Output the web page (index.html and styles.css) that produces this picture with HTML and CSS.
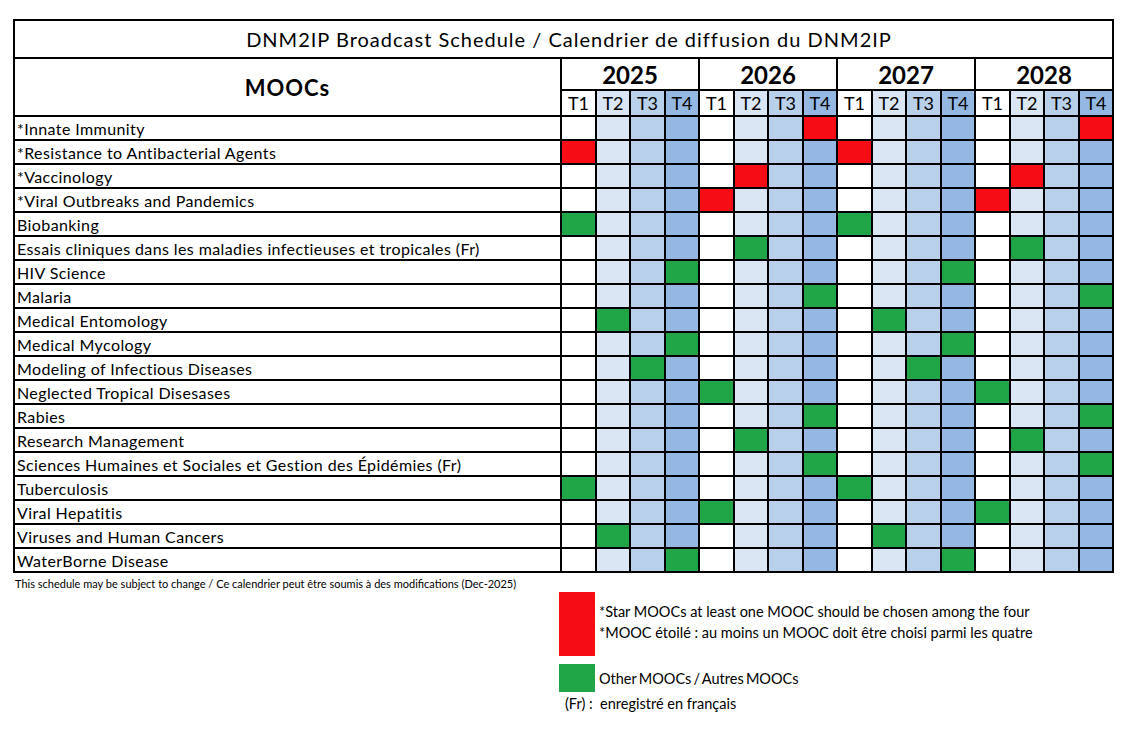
FILE: index.html
```html
<!DOCTYPE html>
<html lang="en">
<head>
<meta charset="utf-8">
<title>DNM2IP Broadcast Schedule</title>
<link rel="stylesheet" href="styles.css">
</head>
<body>
<div class="page">
  <div class="sched">
    <div class="title">DNM2IP Broadcast Schedule / Calendrier de diffusion du DNM2IP</div>
    <div class="moocs">MOOCs</div>
    <div class="year">2025</div><div class="year">2026</div><div class="year">2027</div><div class="year">2028</div>
    <div class="t a">T1</div><div class="t b">T2</div><div class="t c">T3</div><div class="t d">T4</div>
    <div class="t a">T1</div><div class="t b">T2</div><div class="t c">T3</div><div class="t d">T4</div>
    <div class="t a">T1</div><div class="t b">T2</div><div class="t c">T3</div><div class="t d">T4</div>
    <div class="t a">T1</div><div class="t b">T2</div><div class="t c">T3</div><div class="t d">T4</div>

    <div class="n">*Innate Immunity</div>
    <div class="a"></div><div class="b"></div><div class="c"></div><div class="d"></div><div class="a"></div><div class="b"></div><div class="c"></div><div class="r"></div>
    <div class="a"></div><div class="b"></div><div class="c"></div><div class="d"></div><div class="a"></div><div class="b"></div><div class="c"></div><div class="r"></div>

    <div class="n">*Resistance to Antibacterial Agents</div>
    <div class="r"></div><div class="b"></div><div class="c"></div><div class="d"></div><div class="a"></div><div class="b"></div><div class="c"></div><div class="d"></div>
    <div class="r"></div><div class="b"></div><div class="c"></div><div class="d"></div><div class="a"></div><div class="b"></div><div class="c"></div><div class="d"></div>

    <div class="n">*Vaccinology</div>
    <div class="a"></div><div class="b"></div><div class="c"></div><div class="d"></div><div class="a"></div><div class="r"></div><div class="c"></div><div class="d"></div>
    <div class="a"></div><div class="b"></div><div class="c"></div><div class="d"></div><div class="a"></div><div class="r"></div><div class="c"></div><div class="d"></div>

    <div class="n">*Viral Outbreaks and Pandemics</div>
    <div class="a"></div><div class="b"></div><div class="c"></div><div class="d"></div><div class="r"></div><div class="b"></div><div class="c"></div><div class="d"></div>
    <div class="a"></div><div class="b"></div><div class="c"></div><div class="d"></div><div class="r"></div><div class="b"></div><div class="c"></div><div class="d"></div>

    <div class="n">Biobanking</div>
    <div class="g"></div><div class="b"></div><div class="c"></div><div class="d"></div><div class="a"></div><div class="b"></div><div class="c"></div><div class="d"></div>
    <div class="g"></div><div class="b"></div><div class="c"></div><div class="d"></div><div class="a"></div><div class="b"></div><div class="c"></div><div class="d"></div>

    <div class="n">Essais cliniques dans les maladies infectieuses et tropicales (Fr)</div>
    <div class="a"></div><div class="b"></div><div class="c"></div><div class="d"></div><div class="a"></div><div class="g"></div><div class="c"></div><div class="d"></div>
    <div class="a"></div><div class="b"></div><div class="c"></div><div class="d"></div><div class="a"></div><div class="g"></div><div class="c"></div><div class="d"></div>

    <div class="n">HIV Science</div>
    <div class="a"></div><div class="b"></div><div class="c"></div><div class="g"></div><div class="a"></div><div class="b"></div><div class="c"></div><div class="d"></div>
    <div class="a"></div><div class="b"></div><div class="c"></div><div class="g"></div><div class="a"></div><div class="b"></div><div class="c"></div><div class="d"></div>

    <div class="n">Malaria</div>
    <div class="a"></div><div class="b"></div><div class="c"></div><div class="d"></div><div class="a"></div><div class="b"></div><div class="c"></div><div class="g"></div>
    <div class="a"></div><div class="b"></div><div class="c"></div><div class="d"></div><div class="a"></div><div class="b"></div><div class="c"></div><div class="g"></div>

    <div class="n">Medical Entomology</div>
    <div class="a"></div><div class="g"></div><div class="c"></div><div class="d"></div><div class="a"></div><div class="b"></div><div class="c"></div><div class="d"></div>
    <div class="a"></div><div class="g"></div><div class="c"></div><div class="d"></div><div class="a"></div><div class="b"></div><div class="c"></div><div class="d"></div>

    <div class="n">Medical Mycology</div>
    <div class="a"></div><div class="b"></div><div class="c"></div><div class="g"></div><div class="a"></div><div class="b"></div><div class="c"></div><div class="d"></div>
    <div class="a"></div><div class="b"></div><div class="c"></div><div class="g"></div><div class="a"></div><div class="b"></div><div class="c"></div><div class="d"></div>

    <div class="n">Modeling of Infectious Diseases</div>
    <div class="a"></div><div class="b"></div><div class="g"></div><div class="d"></div><div class="a"></div><div class="b"></div><div class="c"></div><div class="d"></div>
    <div class="a"></div><div class="b"></div><div class="g"></div><div class="d"></div><div class="a"></div><div class="b"></div><div class="c"></div><div class="d"></div>

    <div class="n">Neglected Tropical Disesases</div>
    <div class="a"></div><div class="b"></div><div class="c"></div><div class="d"></div><div class="g"></div><div class="b"></div><div class="c"></div><div class="d"></div>
    <div class="a"></div><div class="b"></div><div class="c"></div><div class="d"></div><div class="g"></div><div class="b"></div><div class="c"></div><div class="d"></div>

    <div class="n">Rabies</div>
    <div class="a"></div><div class="b"></div><div class="c"></div><div class="d"></div><div class="a"></div><div class="b"></div><div class="c"></div><div class="g"></div>
    <div class="a"></div><div class="b"></div><div class="c"></div><div class="d"></div><div class="a"></div><div class="b"></div><div class="c"></div><div class="g"></div>

    <div class="n">Research Management</div>
    <div class="a"></div><div class="b"></div><div class="c"></div><div class="d"></div><div class="a"></div><div class="g"></div><div class="c"></div><div class="d"></div>
    <div class="a"></div><div class="b"></div><div class="c"></div><div class="d"></div><div class="a"></div><div class="g"></div><div class="c"></div><div class="d"></div>

    <div class="n">Sciences Humaines et Sociales et Gestion des Épidémies (Fr)</div>
    <div class="a"></div><div class="b"></div><div class="c"></div><div class="d"></div><div class="a"></div><div class="b"></div><div class="c"></div><div class="g"></div>
    <div class="a"></div><div class="b"></div><div class="c"></div><div class="d"></div><div class="a"></div><div class="b"></div><div class="c"></div><div class="g"></div>

    <div class="n">Tuberculosis</div>
    <div class="g"></div><div class="b"></div><div class="c"></div><div class="d"></div><div class="a"></div><div class="b"></div><div class="c"></div><div class="d"></div>
    <div class="g"></div><div class="b"></div><div class="c"></div><div class="d"></div><div class="a"></div><div class="b"></div><div class="c"></div><div class="d"></div>

    <div class="n">Viral Hepatitis</div>
    <div class="a"></div><div class="b"></div><div class="c"></div><div class="d"></div><div class="g"></div><div class="b"></div><div class="c"></div><div class="d"></div>
    <div class="a"></div><div class="b"></div><div class="c"></div><div class="d"></div><div class="g"></div><div class="b"></div><div class="c"></div><div class="d"></div>

    <div class="n">Viruses and Human Cancers</div>
    <div class="a"></div><div class="g"></div><div class="c"></div><div class="d"></div><div class="a"></div><div class="b"></div><div class="c"></div><div class="d"></div>
    <div class="a"></div><div class="g"></div><div class="c"></div><div class="d"></div><div class="a"></div><div class="b"></div><div class="c"></div><div class="d"></div>

    <div class="n">WaterBorne Disease</div>
    <div class="a"></div><div class="b"></div><div class="c"></div><div class="g"></div><div class="a"></div><div class="b"></div><div class="c"></div><div class="d"></div>
    <div class="a"></div><div class="b"></div><div class="c"></div><div class="g"></div><div class="a"></div><div class="b"></div><div class="c"></div><div class="d"></div>
  </div>

  <p class="note">This schedule may be subject to change / Ce calendrier peut être soumis à des modifications (Dec-2025)</p>

  <div class="legend">
    <div class="leg-row">
      <span class="swatch swatch-red"></span>
      <div class="leg-text leg-star">
        <div>*Star MOOCs at least one MOOC should be chosen among the four</div>
        <div>*MOOC étoilé : au moins un MOOC doit être choisi parmi les quatre</div>
      </div>
    </div>
    <div class="leg-row leg-other">
      <span class="swatch swatch-green"></span>
      <div class="leg-text leg-tight">Other MOOCs / Autres MOOCs</div>
    </div>
    <div class="leg-fr">(Fr) :&nbsp; enregistré en français</div>
  </div>
</div>
</body>
</html>
```

FILE: styles.css
```css
* { box-sizing: border-box; }

body {
  margin: 0;
  background: #fff;
  color: #000;
  font-family: Lato, "Open Sans", "Liberation Sans", sans-serif;
}

.page {
  padding: 19px 0 0 13px;
}

.sched {
  display: grid;
  grid-template-columns: 545px repeat(8, 33px 32px);
  grid-template-rows: 36px 30px 24px repeat(19, 22px);
  gap: 2px;
  padding: 2px;
  background: #000;
  width: max-content;
}

.title {
  grid-column: 1 / -1;
  background: #fff;
  display: flex;
  align-items: center;
  justify-content: center;
  font-size: 20px;
  letter-spacing: 1px;
  padding-left: 11px;
}

.moocs {
  grid-row: span 2;
  background: #fff;
  display: flex;
  align-items: center;
  justify-content: center;
  font-size: 22px;
  font-weight: bold;
  letter-spacing: 1px;
}

.year {
  grid-column: span 4;
  background: #fff;
  display: flex;
  align-items: center;
  justify-content: center;
  font-size: 24px;
  font-weight: bold;
}

.t {
  display: flex;
  align-items: center;
  justify-content: center;
  font-size: 18px;
}

.n {
  background: #fff;
  font-size: 16px;
  letter-spacing: 0.4px;
  line-height: 22px;
  padding: 1px 0 0 2px;
  white-space: nowrap;
}

.a { background: #fff; }
.b { background: #dae6f4; }
.c { background: #b8d0ea; }
.d { background: #95b8e2; }
.r { background: #f50c14; }
.g { background: #21a647; }

.note {
  margin: 3px 0 0 2px;
  font-size: 11px;
  line-height: 15px;
}

.legend {
  margin: 1px 0 0 546px;
}

.leg-row {
  display: flex;
  align-items: flex-start;
}

.swatch {
  display: block;
  width: 36px;
  flex: none;
}

.swatch-red {
  height: 64px;
  background: #f50c14;
}

.swatch-green {
  height: 28px;
  background: #21a647;
}

.leg-text {
  padding-left: 4px;
  font-size: 14.5px;
  line-height: 21px;
  white-space: nowrap;
}

.leg-tight {
  word-spacing: -1.5px;
}

.leg-star {
  padding-top: 9px;
}

.leg-other {
  margin-top: 8px;
  align-items: center;
}

.leg-fr {
  margin-top: 2px;
  padding-left: 6px;
  font-size: 14.5px;
  line-height: 20px;
}
```
